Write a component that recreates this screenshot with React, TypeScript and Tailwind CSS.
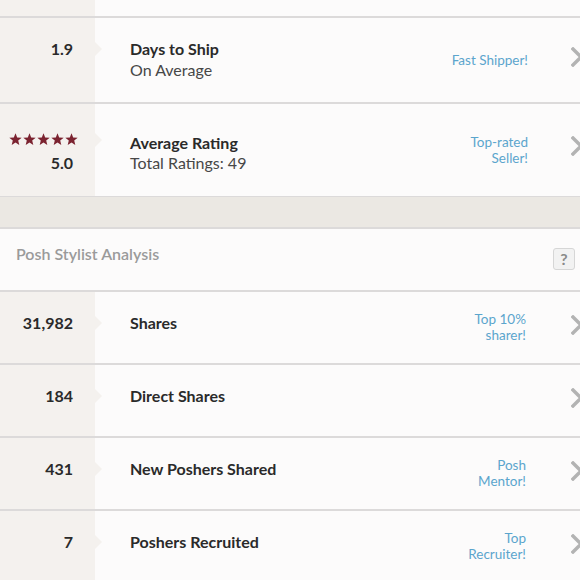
import React from "react";

const Divider = () => <div className="h-[2px] bg-[#dcdada]" />;

const Notch = ({ top }: { top: number }) => (
  <div
    className="absolute right-[-7px] w-0 h-0 border-y-[7px] border-y-transparent border-l-[7px] border-l-[#f4f1ee]"
    style={{ top }}
  />
);

const Chevron = ({ top }: { top: number }) => (
  <div className="w-[12px] shrink-0 mr-[-3px]" style={{ paddingTop: top }}>
    <svg width="12" height="20" viewBox="0 0 12 20">
      <path d="M2 2 L10 10 L2 18" fill="none" stroke="#b3b3b3" strokeWidth="3.4" strokeLinecap="square" />
    </svg>
  </div>
);

const Star = () => (
  <svg width="13" height="13" viewBox="0 0 24 23">
    <path d="M12 0 L15.1 7.6 L23.4 8.2 L17 13.5 L19 21.6 L12 17.2 L5 21.6 L7 13.5 L0.6 8.2 L8.9 7.6 Z" fill="#7b2330" />
  </svg>
);

type RowProps = {
  num: string;
  title: string;
  badge?: string[];
};

const StatRow = ({ num, title, badge }: RowProps) => (
  <div className="flex h-[71px]">
    <div className="relative w-[95px] shrink-0 bg-[#f4f1ee] flex justify-end pr-[22px] pt-[21px]">
      <span className="text-[16px] leading-[20px] font-bold text-[#2a2a2a]">{num}</span>
      <Notch top={24} />
    </div>
    <div className="flex-1 flex items-start pl-[35px] overflow-hidden">
      <div className="pt-[21px] text-[16px] leading-[20px] font-bold text-[#2a2a2a]">{title}</div>
      <div className="ml-auto pt-[19px] text-right text-[13.5px] leading-[16px] text-[#5ba5cd]">
        {badge && badge.map((b) => <div key={b}>{b}</div>)}
      </div>
      <div className="w-[45px] shrink-0" />
      <Chevron top={23} />
    </div>
  </div>
);

export default function App() {
  return (
    <div
      className="w-[580px] h-[580px] overflow-hidden bg-[#fcfbfb]"
      style={{ fontFamily: "Lato, 'Open Sans', sans-serif" }}
    >
      {/* partial top row */}
      <div className="flex h-[16px]">
        <div className="w-[95px] bg-[#f4f1ee]" />
        <div className="flex-1" />
      </div>
      <Divider />
      {/* Days to ship */}
      <div className="flex h-[84px]">
        <div className="relative w-[95px] shrink-0 bg-[#f4f1ee] flex justify-end pr-[22px] pt-[21px]">
          <span className="text-[16px] leading-[20px] font-bold text-[#2a2a2a]">1.9</span>
          <Notch top={24} />
        </div>
        <div className="flex-1 flex items-start pl-[35px] overflow-hidden">
          <div className="pt-[21px]">
            <div className="text-[16px] leading-[20px] font-bold text-[#2a2a2a]">Days to Ship</div>
            <div className="text-[16px] leading-[20px] text-[#474747] mt-[1px]">On Average</div>
          </div>
          <div className="ml-auto pt-[34px] text-right text-[13.5px] leading-[16px] text-[#5ba5cd]">Fast Shipper!</div>
          <div className="w-[43px] shrink-0" />
          <Chevron top={29} />
        </div>
      </div>
      <Divider />
      {/* Average rating */}
      <div className="flex h-[92px]">
        <div className="relative w-[95px] shrink-0 bg-[#f4f1ee] flex flex-col items-end pr-[22px] pt-[29px]">
          <div className="flex gap-[1px] mr-[-5px]">
            <Star />
            <Star />
            <Star />
            <Star />
            <Star />
          </div>
          <span className="mt-[7px] text-[16px] leading-[20px] font-bold text-[#2a2a2a]">5.0</span>
          <Notch top={29} />
        </div>
        <div className="flex-1 flex items-start pl-[35px] overflow-hidden">
          <div className="pt-[29px]">
            <div className="text-[16px] leading-[20px] font-bold text-[#2a2a2a]">Average Rating</div>
            <div className="text-[16px] leading-[20px] text-[#474747]">Total Ratings: 49</div>
          </div>
          <div className="ml-auto pt-[30px] text-right text-[13.5px] leading-[16px] text-[#5ba5cd]">
            <div>Top-rated</div>
            <div>Seller!</div>
          </div>
          <div className="w-[43px] shrink-0" />
          <Chevron top={32} />
        </div>
      </div>
      <div className="h-[1px] bg-[#dcdada]" />
      {/* gray band */}
      <div className="h-[30px] bg-[#ebe8e3]" />
      <Divider />
      {/* header */}
      <div className="flex items-start h-[61px] pl-[16px] pr-[5px]">
        <div className="pt-[15px] text-[16px] leading-[20px] font-semibold text-[#9a9a9a]">Posh Stylist Analysis</div>
        <div className="ml-auto mt-[19px] w-[22px] h-[22px] rounded-[3px] border border-[#d6d6d6] bg-[#f2f2f2] flex items-center justify-center text-[16px] font-bold text-[#8a8a8a]">
          ?
        </div>
      </div>
      <Divider />
      <StatRow num="31,982" title="Shares" badge={["Top 10%", "sharer!"]} />
      <Divider />
      <StatRow num="184" title="Direct Shares" />
      <Divider />
      <StatRow num="431" title="New Poshers Shared" badge={["Posh", "Mentor!"]} />
      <Divider />
      <StatRow num="7" title="Poshers Recruited" badge={["Top", "Recruiter!"]} />
    </div>
  );
}
